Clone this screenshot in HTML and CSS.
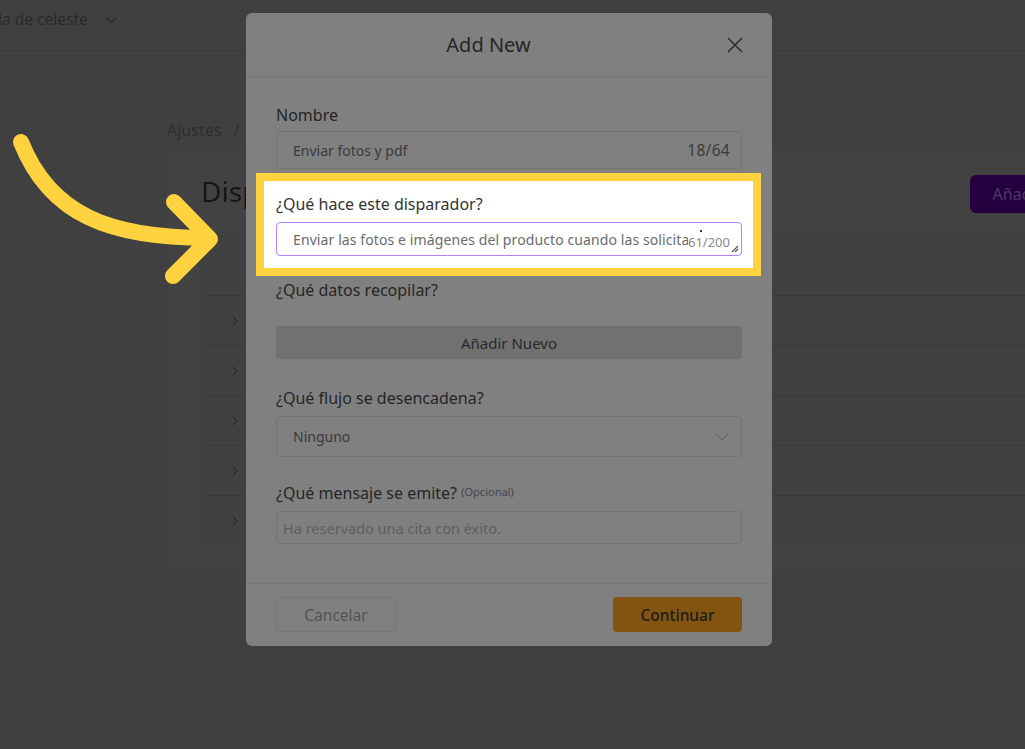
FILE: index.html
```html
<!DOCTYPE html>
<html lang="es">
<head>
<meta charset="utf-8">
<title>Disparadores</title>
<link rel="stylesheet" href="styles.css">
</head>
<body>
<div class="page">
  <header class="topbar">
    <span class="brand">la de celeste</span>
    <svg class="brand-chev" width="12" height="8" viewBox="0 0 12 8"><path d="M1 1.5l5 5 5-5" fill="none" stroke="#2b2b2b" stroke-width="1.4"/></svg>
  </header>
  <main class="content">
    <nav class="crumbs">Ajustes <span class="sep">/</span></nav>
    <section class="card">
      <div class="card-head">
        <h1 class="card-title">Disparadores</h1>
        <button class="btn-purple">Añadir Nuevo</button>
      </div>
      <div class="table">
        <div class="thead"></div>
        <div class="row"><svg width="6" height="10" viewBox="0 0 6 10"><path d="M1 1l4 4-4 4" fill="none" stroke="#2c2c2c" stroke-width="1.2"/></svg></div>
        <div class="row"><svg width="6" height="10" viewBox="0 0 6 10"><path d="M1 1l4 4-4 4" fill="none" stroke="#2c2c2c" stroke-width="1.2"/></svg></div>
        <div class="row"><svg width="6" height="10" viewBox="0 0 6 10"><path d="M1 1l4 4-4 4" fill="none" stroke="#2c2c2c" stroke-width="1.2"/></svg></div>
        <div class="row"><svg width="6" height="10" viewBox="0 0 6 10"><path d="M1 1l4 4-4 4" fill="none" stroke="#2c2c2c" stroke-width="1.2"/></svg></div>
        <div class="row"><svg width="6" height="10" viewBox="0 0 6 10"><path d="M1 1l4 4-4 4" fill="none" stroke="#2c2c2c" stroke-width="1.2"/></svg></div>
      </div>
    </section>
  </main>
</div>

<div class="modal">
  <div class="modal-head">
    <h2 class="modal-title">Add New</h2>
    <button class="close" aria-label="Cerrar">
      <svg width="16" height="16" viewBox="0 0 16 16"><path d="M1 1l14 14M15 1L1 15" stroke="#2e2e2e" stroke-width="1.6" fill="none"/></svg>
    </button>
  </div>
  <div class="modal-body">
    <div class="label l-name">Nombre</div>
    <div class="input i-name"><span class="val">Enviar fotos y pdf</span><span class="cnt">18/64</span></div>

    <div class="spot">
      <div class="label l-what">¿Qué hace este disparador?</div>
      <div class="textarea">
        <span class="ta-text">Enviar las fotos e imágenes del producto cuando las solicita</span>
        <span class="ta-cnt">61/200</span>
        <span class="ta-dot"></span>
        <svg class="grip" width="8" height="8" viewBox="0 0 8 8"><path d="M7 1L1 7M7 4L4 7" stroke="#555" stroke-width="1.2" fill="none"/></svg>
      </div>
    </div>

    <div class="label l-data">¿Qué datos recopilar?</div>
    <button class="btn-add">Añadir Nuevo</button>

    <div class="label l-flow">¿Qué flujo se desencadena?</div>
    <div class="input i-select"><span class="val">Ninguno</span>
      <svg width="14" height="8" viewBox="0 0 14 8"><path d="M1 1l6 6 6-6" fill="none" stroke="#6a6a6a" stroke-width="1.2"/></svg>
    </div>

    <div class="label l-msg">¿Qué mensaje se emite? <span class="opt">(Opcional)</span></div>
    <div class="input i-msg"><span class="ph">Ha reservado una cita con éxito.</span></div>
  </div>
  <div class="modal-foot">
    <button class="btn-cancel">Cancelar</button>
    <button class="btn-go">Continuar</button>
  </div>
</div>

<svg class="arrow" width="260" height="300" viewBox="0 0 260 300">
  <path d="M21 142 C 50 215, 110 238, 208 238" fill="none" stroke="#ffd23f" stroke-width="16" stroke-linecap="round"/>
  <path d="M174 202 L210 239 L173 276" fill="none" stroke="#ffd23f" stroke-width="16" stroke-linecap="round" stroke-linejoin="round"/>
</svg>
</body>
</html>
```

FILE: styles.css
```css
* { box-sizing: border-box; }
html, body { margin: 0; padding: 0; }
body {
  width: 1025px;
  height: 749px;
  overflow: hidden;
  position: relative;
  background: #404040;
  font-family: "Noto Sans", "DejaVu Sans", sans-serif;
}
button { font-family: inherit; cursor: pointer; }

/* background page */
.topbar {
  height: 51px;
  border-bottom: 1px solid #3a3a3a;
  display: flex;
  align-items: flex-start;
  padding-top: 7px;
}
.brand {
  margin-left: -2px;
  font-size: 15.5px;
  line-height: 24px;
  color: #2b2b2b;
}
.brand-chev { margin: 9px 0 0 17px; }

.content { padding: 68px 0 0 167px; }
.crumbs {
  font-size: 16px;
  line-height: 22px;
  color: #2e2e2e;
}
.crumbs .sep { margin-left: 8px; }
.card {
  margin-top: 6px;
  width: 984px;
  height: 425px;
  background: #424242;
  border-radius: 8px;
  padding: 25px 33px 0 34px;
}
.card-head {
  display: flex;
  justify-content: space-between;
  align-items: flex-start;
}
.card-title {
  margin: 0;
  font-size: 28px;
  line-height: 38px;
  font-weight: 400;
  color: #161616;
}
.btn-purple {
  margin-top: 3px;
  height: 38px;
  padding: 0 23px;
  border: none;
  border-radius: 6px;
  background: #25003f;
  color: #4b3a63;
  font-size: 16px;
}
.table {
  margin: 23px 0 0 -3px;
  background: #414141;
}
.thead { height: 59px; border-top: 1px solid #3c3c3c; }
.row {
  height: 50px;
  margin: 0 0 0 10px;
  padding-left: 24px;
  border-top: 1px solid #3a3a3a;
  display: flex;
  align-items: center;
}

/* modal */
.modal {
  position: absolute;
  left: 246px;
  top: 13px;
  width: 526px;
  height: 633px;
  background: #808080;
  border-radius: 6px;
  display: flex;
  flex-direction: column;
}
.modal-head {
  height: 64px;
  border-bottom: 1px solid #767676;
  display: flex;
  align-items: center;
  padding: 0 29px;
}
.modal-title {
  flex: 1;
  margin: 0;
  text-align: center;
  font-size: 20px;
  font-weight: 400;
  line-height: 28px;
  color: #262626;
}
.close {
  margin-left: 25px;
  width: 16px;
  height: 16px;
  padding: 0;
  border: none;
  background: none;
  display: flex;
}
.modal-body {
  flex: 1;
  padding: 27px 30px 0 30px;
}
.label {
  font-size: 16px;
  line-height: 22px;
  color: #262626;
}
.opt { font-size: 11px; color: #474747; vertical-align: 3px; }
.input {
  border: 1px solid #747474;
  border-radius: 4px;
  display: flex;
  align-items: center;
  font-size: 14px;
  color: #3a3a3a;
}
.i-name {
  margin-top: 5px;
  height: 38px;
  padding: 0 11px 0 16px;
  justify-content: space-between;
}
.i-name .cnt { font-size: 15.5px; letter-spacing: 0.3px; }
.spot {
  margin: 12px -11px 0 -12px;
  padding: 12px 11px 12px 12px;
  background: #ffffff;
  box-shadow: 0 0 0 8px #ffd23f;
}
.l-what { color: #333333; }
.textarea {
  position: relative;
  margin-top: 7px;
  height: 34px;
  border: 1px solid #b781fb;
  border-radius: 4px;
  display: flex;
  align-items: center;
  padding: 0 11px 0 16px;
}
.ta-text {
  flex: 1;
  min-width: 0;
  overflow: hidden;
  white-space: nowrap;
  font-size: 14px;
  letter-spacing: 0.1px;
  color: #6b6b6b;
}
.ta-cnt {
  margin-top: 6px;
  font-size: 13px;
  color: #8a8a8a;
}
.ta-dot {
  position: absolute;
  left: 423px;
  top: 7px;
  width: 2px;
  height: 2px;
  background: #333;
}
.grip { position: absolute; right: 2px; bottom: 2px; }

.l-data { margin-top: 11px; }
.btn-add {
  display: block;
  width: 100%;
  margin-top: 25px;
  height: 33px;
  border: none;
  border-radius: 4px;
  background: #717171;
  color: #282828;
  font-size: 15px;
}
.l-flow { margin-top: 28px; }
.i-select {
  margin-top: 7px;
  height: 41px;
  padding: 0 12px 0 16px;
  justify-content: space-between;
}
.l-msg { margin-top: 24px; }
.i-msg {
  margin-top: 7px;
  height: 33px;
  padding: 0 6px;
  font-size: 14.5px;
}
.ph { color: #5e5e5e; }

.modal-foot {
  height: 63px;
  border-top: 1px solid #767676;
  padding: 13px 30px 0 30px;
  display: flex;
  justify-content: space-between;
  align-items: flex-start;
}
.btn-cancel {
  width: 120px;
  height: 35px;
  border: 1px solid #767676;
  border-radius: 4px;
  background: transparent;
  color: #535353;
  font-size: 15.5px;
}
.btn-go {
  width: 129px;
  height: 35px;
  border: none;
  border-radius: 4px;
  background: #83540f;
  color: #1b1b1b;
  font-size: 15.5px;
  font-weight: 500;
}

.arrow {
  position: absolute;
  left: 0;
  top: 0;
  pointer-events: none;
}
```
